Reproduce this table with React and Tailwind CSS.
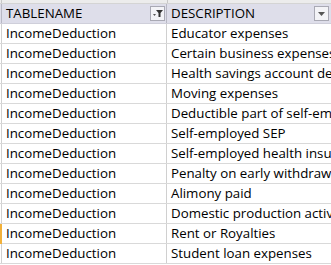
import React from 'react';

const rows = [
  'Educator expenses',
  'Certain business expenses',
  'Health savings account deduction',
  'Moving expenses',
  'Deductible part of self-employment tax',
  'Self-employed SEP',
  'Self-employed health insurance',
  'Penalty on early withdrawal',
  'Alimony paid',
  'Domestic production activities',
  'Rent or Royalties',
  'Student loan expenses',
];

const FilterButton = ({ filtered }) => (
  <div className="w-[15px] h-[15px] border border-[#a9a9b4] bg-[#f3f3f7] flex items-center justify-center">
    {filtered ? (
      <svg width="11" height="9" viewBox="0 0 11 9">
        <path d="M1 5h3l-1.5 2z" fill="#555" />
        <path d="M4 1h7l-2.5 3v4h-2v-4z" fill="#333" />
      </svg>
    ) : (
      <svg width="7" height="4" viewBox="0 0 7 4">
        <path d="M0 0h7l-3.5 4z" fill="#555" />
      </svg>
    )}
  </div>
);

const App = () => {
  return (
    <div className="w-[331px] h-[265px] overflow-hidden bg-white text-[13.3px] text-black" style={{ fontFamily: '"Open Sans", sans-serif' }}>
      {/* strip above header */}
      <div className="flex h-[4px] bg-[#ececec] border-b border-[#d4d4d4]">
        <div className="w-[167px] border-r border-[#c8c8c8] border-l border-l-[#c8c8c8] ml-[1px]" />
        <div className="flex-1" />
      </div>
      {/* header */}
      <div className="flex h-[20px] bg-[#dedeea] border-b border-[#cfcfda]">
        <div className="w-[166px] ml-[1px] border-l border-[#b8b8c4] border-r border-r-[#b8b8c4] flex items-center justify-between pl-[4px] pr-[1px]">
          <span>TABLENAME</span>
          <FilterButton filtered />
        </div>
        <div className="flex-1 flex items-center justify-between pl-[4px] pr-[2px] min-w-0">
          <span>DESCRIPTION</span>
          <FilterButton />
        </div>
      </div>
      {/* rows */}
      {rows.map((desc, i) => (
        <div key={i} className="flex h-[20px] border-b border-[#d9d9d9] relative">
          {i === 10 && <div className="absolute left-0 top-0 w-[2px] h-[20px] bg-[#f2b13a]" />}
          <div className="w-[166px] ml-[1px] border-l border-[#d0d0d0] border-r border-r-[#d0d0d0] flex items-center pl-[4px] whitespace-nowrap overflow-hidden">
            IncomeDeduction
          </div>
          <div className="flex-1 flex items-center pl-[4px] whitespace-nowrap overflow-hidden min-w-0">
            {desc}
          </div>
        </div>
      ))}
    </div>
  );
};

export default App;
